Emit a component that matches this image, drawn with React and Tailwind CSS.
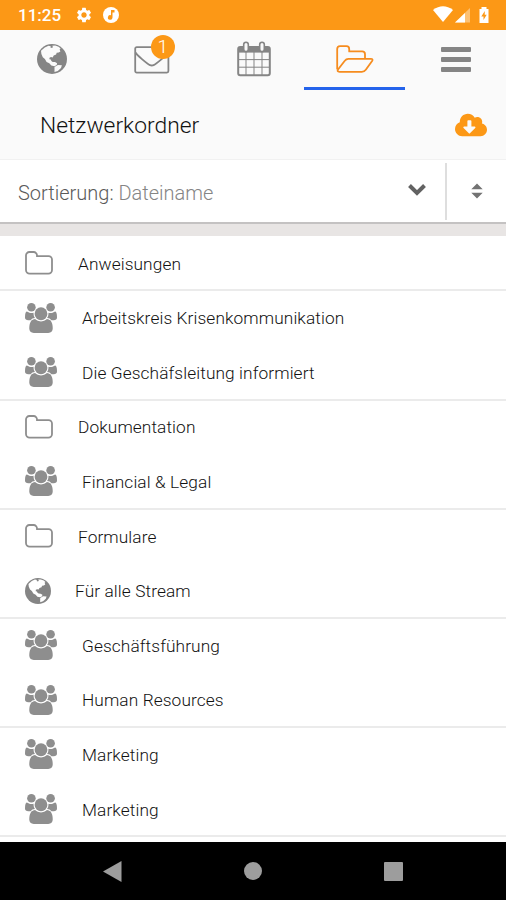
import { FaCloudDownloadAlt } from 'react-icons/fa';
import { MdSettings } from 'react-icons/md';

function GlobeIcon({ className, land }) {
  return (
    <svg viewBox="0 0 30 30" className={className}>
      <circle cx="15" cy="15" r="15" fill="currentColor" />
      <g className={land}>
        <path d="M4 6.800 7.800 3.600l3.700-1.800 2.300.5-.4 1.200 1.600.4 1-.9-.8-1.200 3-.2 3.400 1.200 2 1.700-1 .9.800 2-1.700 1.200-2 .2-.6 1.800-2.400.9-1 1.900-1.700-.5-1.500.8-.1 1.500 1.400.3.600 1.500 1.300.9 2.300.2 2.100 1.200-.4 1.700-2.200 1.300-3.200-.8-2-2.300-2.700-1.300-1.700-3-2.100-1.700-1.400-3.200z" />
        <path d="M17.500 23l3.400-2 4 .3-.9 2.600-3.200 3-3.300 1z" />
      </g>
    </svg>
  );
}

function FolderIcon({ className }) {
  return (
    <svg viewBox="0 0 28 24" className={className} fill="none" stroke="currentColor" strokeWidth="1.8">
      <path d="M1 19V4.5A3.4 3.4 0 0 1 4.4 1h4.2A3.4 3.4 0 0 1 12 4.500v.7h11.6A3.4 3.4 0 0 1 27 8.600V19a3.600 3.600 0 0 1-3.600 3.600H4.600A3.600 3.600 0 0 1 1 19z" />
    </svg>
  );
}

function GroupIcon({ className }) {
  return (
    <svg viewBox="0 0 1920 1792" className={className} fill="currentColor">
      <circle cx="384" cy="256" r="256" />
      <circle cx="1536" cy="256" r="256" />
      <circle cx="960" cy="640" r="384" />
      <path d="M593 896q-162 5-265 128h-134q-82 0-138-40.5t-56-118.5q0-353 124-353 6 0 43.5 21t97.5 42.5 119 21.5q67 0 133-23-5 37-5 66 0 139 81 256z" />
      <path d="M1920 865q0 78-56 118.5t-138 40.5h-134q-103-123-265-128 81-117 81-256 0-29-5-66 66 23 133 23 59 0 119-21.5t97.5-42.5 43.5-21q124 0 124 353z" />
      <path d="M1664 1533q0 120-73 189.5t-194 69.5h-874q-121 0-194-69.5t-73-189.5q0-53 3.5-103.5t14-109 26.5-108.5 43-97.5 62-81 85.5-53.5 111.5-20q10 0 43 21.5t73 48 107 48 135 21.5 135-21.5 107-48 73-48 43-21.5q61 0 111.5 20t85.5 53.5 62 81 43 97.5 26.5 108.5 14 109 3.5 103.5z" />
    </svg>
  );
}

function MailIcon() {
  return (
    <svg viewBox="0 0 36 28" className="h-7 w-9" fill="none" stroke="currentColor" strokeWidth="1.8">
      <rect x="1.2" y="1.2" width="33.2" height="25.4" rx="1.5" />
      <path d="M1.500 6.500c1.200 2.500 12 11.500 14.500 12.600q1.800.8 3.600 0C22 18 33 9 34.200 6.500" />
    </svg>
  );
}

function CalendarIcon() {
  return (
    <svg viewBox="0 0 34 36" className="h-9 w-[34px]" fill="none" stroke="currentColor">
      <rect x="1.2" y="6" width="31.600" height="28.200" rx="2" strokeWidth="2" />
      <path d="M1.500 6h31v5.600h-31z" fill="currentColor" stroke="none" />
      <path d="M9 11v23M17 11v23M25 11v23M2 18.600h30M2 26.200h30" strokeWidth="1" />
      <rect x="6.700" y="1.200" width="4.600" height="9.300" rx="2.300" fill="#fafafa" strokeWidth="1.600" />
      <rect x="22.700" y="1.200" width="4.600" height="9.300" rx="2.300" fill="#fafafa" strokeWidth="1.600" />
    </svg>
  );
}

function OpenFolderIcon() {
  return (
    <svg viewBox="0 0 38 28" className="h-7 w-[38px]" fill="none" stroke="currentColor" strokeWidth="1.800" strokeLinejoin="round">
      <path d="M1.200 24.500V4Q1.200 1.200 4 1.200h6.500q2.700 0 2.700 2.800v2.400h13q2.800 0 2.800 2.800v4.600" />
      <path d="M12.400 13.800h22.500q2.500 0 1.200 2.200l-6.300 8.800q-1.400 2-4 2H3.500q-3 0-1.300-2.500l6.600-8.500q1.400-2 3.600-2z" />
    </svg>
  );
}

const rows = [
  { name: 'Anweisungen', type: 'folder', divider: true },
  { name: 'Arbeitskreis Krisenkommunikation', type: 'group' },
  { name: 'Die Geschäfsleitung informiert', type: 'group', divider: true },
  { name: 'Dokumentation', type: 'folder' },
  { name: 'Financial & Legal', type: 'group', divider: true },
  { name: 'Formulare', type: 'folder' },
  { name: 'Für alle Stream', type: 'globe', divider: true },
  { name: 'Geschäftsführung', type: 'group' },
  { name: 'Human Resources', type: 'group', divider: true },
  { name: 'Marketing', type: 'group' },
  { name: 'Marketing', type: 'group', divider: true },
];

function Row({ name, type, divider }) {
  return (
    <li className={`flex h-[54.6px] items-center border-b-2 pl-[25px] ${divider ? 'border-[#ebebeb]' : 'border-transparent'}`}>
      {type === 'folder' && <FolderIcon className="mr-[25px] h-6 w-7 text-[#8e8e8e]" />}
      {type === 'group' && <GroupIcon className="mr-[25px] h-[30px] w-8 text-[#8e8e8e]" />}
      {type === 'globe' && <GlobeIcon className="mr-[24px] size-[26px] text-[#858585]" land="fill-white" />}
      <span className="pt-[3px] text-[17.3px] font-light tracking-[0.1px] text-[#111]">{name}</span>
    </li>
  );
}

export default function App() {
  return (
    <div className="flex h-[900px] w-[506px] flex-col overflow-hidden bg-white font-['Roboto',sans-serif]">
      {/* Status bar */}
      <div className="flex h-[30px] shrink-0 items-center bg-[#fc9816] pl-[18px] pr-[15px] text-white">
        <span className="w-[57px] pt-[2px] text-[17px] font-medium">11:25</span>
        <MdSettings className="size-[18px]" />
        <svg viewBox="0 0 16 16" className="ml-[10px] size-4">
          <circle cx="8" cy="8" r="8" fill="white" />
          <path d="M8 3h3.500v2.500H9.500v5A2.300 2.300 0 1 1 8 8.300z" fill="#fc9816" />
        </svg>
        <svg viewBox="0 0 58 18" className="ml-auto h-[18px] w-[58px]" fill="white">
          <path d="M0 4.500q10-7.500 20 0L10 16.500z" transform="translate(0 -.5)" />
          <path d="M37 2v14.500H22z" opacity=".4" />
          <path d="M32 7v9.500H22z" />
          <path d="M46.500 3h2V1h5v2h2v14h-9z" />
          <path d="M51.800 5l-3.500 5.500h2.200V14l3.200-5.300h-2z" fill="#fc9816" />
        </svg>
      </div>

      {/* Tabs */}
      <nav className="grid h-[60px] shrink-0 grid-cols-5 bg-[#fafafa] text-[#858585]">
        <div className="flex items-center justify-center pb-[2px] pl-[2px]"><GlobeIcon className="size-[30px]" land="fill-[#fafafa]" /></div>
        <div className="flex items-center justify-center">
          <div className="relative">
            <MailIcon />
            <span className="absolute -top-[11px] left-[17px] flex size-6 items-center justify-center rounded-full bg-[#fc9816] text-[19px] font-light text-white">1</span>
          </div>
        </div>
        <div className="flex items-center justify-center pb-[3px] pl-[2px]"><CalendarIcon /></div>
        <div className="flex items-center justify-center border-b-[3px] border-[#2463eb] pl-[2px] text-[#f68c1e]"><OpenFolderIcon /></div>
        <div className="flex flex-col items-center justify-center gap-[5px] pb-[2px] pl-[2px]">
          <span className="h-[5px] w-[30px] rounded-[1px] bg-[#858585]" />
          <span className="h-[5px] w-[30px] rounded-[1px] bg-[#858585]" />
          <span className="h-[5px] w-[30px] rounded-[1px] bg-[#858585]" />
        </div>
      </nav>

      {/* Title */}
      <header className="flex h-[70px] shrink-0 items-center justify-between border-b border-[#f1f1f1] bg-[#fafafa] pl-10 pr-[19px]">
        <h1 className="pt-[3px] text-[22.8px] font-light text-[#111]">Netzwerkordner</h1>
        <FaCloudDownloadAlt className="size-8 text-[#fc9816]" />
      </header>

      {/* Sorting */}
      <div className="flex h-16 shrink-0 items-center border-b-2 border-[#c4c2c2] pl-[18px]">
        <span className="flex-1 pt-[3px] text-[20px] font-light text-[#5a5a5a]">
          Sortierung: <span className="text-[#858585]">Dateiname</span>
        </span>
        <svg viewBox="0 0 18 12" className="mb-[3px] mr-[19px] h-3 w-[18px]" fill="none" stroke="#626262" strokeWidth="4">
          <path d="M1.500 1.500 9 9l7.500-7.500" />
        </svg>
        <div className="flex h-[57px] w-[61px] items-center justify-center border-l-2 border-[#dedede]">
          <svg viewBox="0 0 12 16" className="h-4 w-3" fill="#737373">
            <path d="M6 .500l5.700 5.800H.3zM6 15.500l5.700-5.800H.3z" />
          </svg>
        </div>
      </div>
      <div className="h-3 shrink-0 bg-[#e8e5e4]" />

      <ul className="min-h-0 flex-1 pt-[0.8px]">
        {rows.map((row, i) => <Row key={i} {...row} />)}
      </ul>

      {/* System navigation */}
      <div className="flex h-[58px] shrink-0 items-center justify-between bg-black pl-[103px] pr-[103px]">
        <svg viewBox="0 0 19 21" className="h-[21px] w-[19px]" fill="#9d9d9d"><path d="M18.500 0v21L0 10.500z" /></svg>
        <span className="size-[18px] rounded-full bg-[#9d9d9d]" />
        <span className="size-[19px] rounded-[1px] bg-[#9d9d9d]" />
      </div>
    </div>
  );
}
